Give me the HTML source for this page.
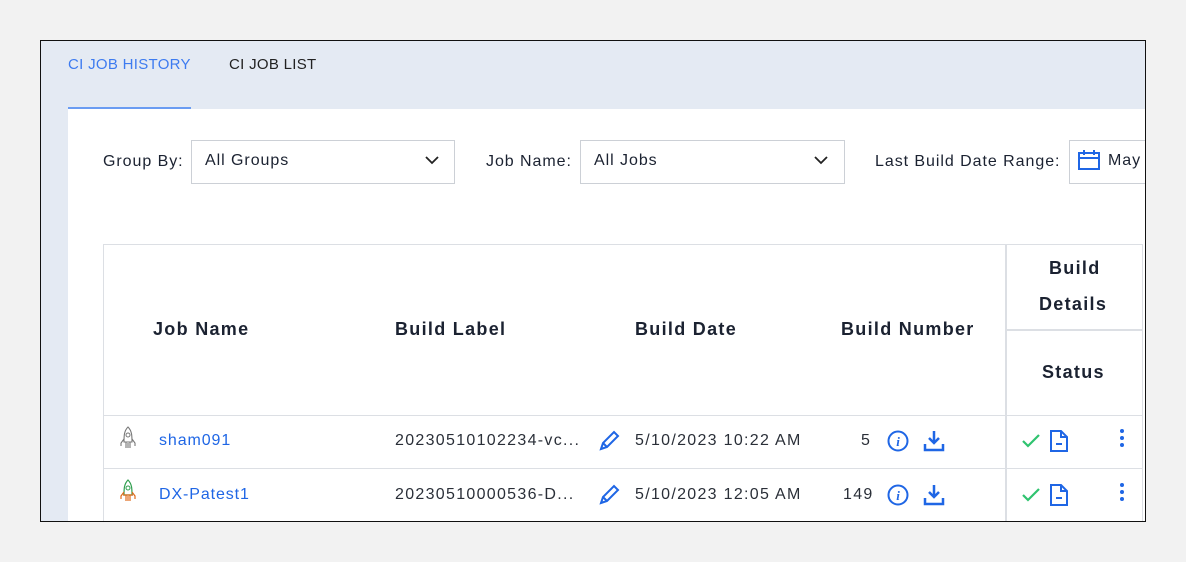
<!DOCTYPE html>
<html><head><style>
*{margin:0;padding:0;box-sizing:border-box}
body{width:1186px;height:562px;background:#f2f2f2;font-family:"Liberation Sans",sans-serif;position:relative;overflow:hidden}
.frame{position:absolute;left:40px;top:40px;width:1106px;height:482px;border:1px solid #111;background:#e4eaf3;overflow:hidden}
.a{position:absolute;white-space:nowrap}
.panel{position:absolute;left:27px;top:68px;width:1080px;height:420px;background:#fff}
.sel{position:absolute;height:44px;border:1px solid #ccd0d6;background:#fff}
.lbl{font-size:16px;color:#1b2231;letter-spacing:0.95px}
.th{font-size:18px;font-weight:bold;color:#1b2231;letter-spacing:1.3px}
.td{font-size:16px;color:#2a2f38;letter-spacing:1.3px}
.lnk{font-size:16px;color:#1f66e5;letter-spacing:0.9px}
.hl{position:absolute;background:#dcdfe4}
</style></head><body>
<div class="frame">
 <div class="a" style="left:27px;top:15px;font-size:15px;color:#3d7bf0;letter-spacing:0.3px">CI JOB HISTORY</div>
 <div class="a" style="left:188px;top:15px;font-size:15px;color:#222;letter-spacing:0.3px">CI JOB LIST</div>
 <div class="a" style="left:27px;top:66px;width:123px;height:3px;background:#6a9cf2"></div>
 <div class="panel"></div>
 <div class="a lbl" style="left:62px;top:112px">Group By:</div>
 <div class="sel" style="left:150px;top:99px;width:264px"></div>
 <div class="a lbl" style="left:164px;top:111px">All Groups</div>
 <svg class="a" style="left:384px;top:115px" width="14" height="9"><path d="M1 1l6 6 6-6" stroke="#222" stroke-width="1.8" fill="none"/></svg>
 <div class="a lbl" style="left:445px;top:112px">Job Name:</div>
 <div class="sel" style="left:539px;top:99px;width:265px"></div>
 <div class="a lbl" style="left:553px;top:111px">All Jobs</div>
 <svg class="a" style="left:773px;top:115px" width="14" height="9"><path d="M1 1l6 6 6-6" stroke="#222" stroke-width="1.8" fill="none"/></svg>
 <div class="a lbl" style="left:834px;top:112px">Last Build Date Range:</div>
 <div class="sel" style="left:1028px;top:99px;width:100px;border-right:none"></div>
 <svg class="a" style="left:1037px;top:109px" width="22" height="20"><rect x="1" y="3" width="20" height="16" stroke="#1f66e5" stroke-width="2" fill="none"/><path d="M1 8h20M6 0v5M16 0v5" stroke="#1f66e5" stroke-width="2"/></svg>
 <div class="a lbl" style="left:1067px;top:111px">May</div>

 <div class="hl" style="left:62px;top:203px;width:1040px;height:1px"></div>
 <div class="hl" style="left:62px;top:203px;width:1px;height:290px"></div>
 <div class="hl" style="left:964px;top:203px;width:2px;height:290px"></div>
 <div class="hl" style="left:1101px;top:203px;width:1px;height:290px"></div>
 <div class="hl" style="left:964px;top:288px;width:137px;height:2px"></div>
 <div class="hl" style="left:62px;top:374px;width:1040px;height:1px"></div>
 <div class="hl" style="left:62px;top:427px;width:1040px;height:1px"></div>

 <div class="a th" style="left:112px;top:278px">Job Name</div>
 <div class="a th" style="left:354px;top:278px">Build Label</div>
 <div class="a th" style="left:594px;top:278px">Build Date</div>
 <div class="a th" style="left:800px;top:278px">Build Number</div>
 <div class="a th" style="left:1008px;top:217px">Build</div>
 <div class="a th" style="left:998px;top:253px">Details</div>
 <div class="a th" style="left:1001px;top:321px">Status</div>

 <svg class="a" style="left:78px;top:385px" width="18" height="26"><path d="M9 1C5 5 5 10 5 16h8c0-6 0-11-4-15zM5 13l-3 4v3M13 13l3 4v3M7 16v6M11 16v6M9 17v5" stroke="#777" stroke-width="1.1" fill="none"/><circle cx="9" cy="9" r="2" stroke="#777" fill="none"/></svg>
 <div class="a lnk" style="left:118px;top:391px">sham091</div>
 <div class="a td" style="left:354px;top:391px">20230510102234-vc...</div>
 <svg class="a" style="left:556px;top:388px" width="24" height="24"><path d="M4 20l2-6L17 3l4 4L10 18z M6 14l4 4" stroke="#1f66e5" stroke-width="2" fill="none"/></svg>
 <div class="a td" style="left:594px;top:391px">5/10/2023 10:22 AM</div>
 <div class="a td" style="left:820px;top:391px">5</div>
 <svg class="a" style="left:846px;top:389px" width="22" height="22"><circle cx="11" cy="11" r="9.5" stroke="#1f66e5" stroke-width="2" fill="none"/><text x="11" y="16" font-size="13" font-style="italic" font-weight="bold" fill="#1f66e5" text-anchor="middle" font-family="Liberation Serif">i</text></svg>
 <svg class="a" style="left:882px;top:389px" width="22" height="22"><path d="M11 1v12M6 8l5 5 5-5M2 14v6h18v-6" stroke="#1f66e5" stroke-width="2.5" fill="none"/></svg>
 <svg class="a" style="left:981px;top:393px" width="18" height="14"><path d="M1 7l5 5L17 1" stroke="#2fc36f" stroke-width="2.2" fill="none"/></svg>
 <svg class="a" style="left:1009px;top:389px" width="18" height="22"><path d="M1 1h10l6 6v14H1z M11 1v6h6 M6 14h6" stroke="#1f66e5" stroke-width="2" fill="none"/></svg>
 <div class="a" style="left:1079px;top:388px;width:4px"><div style="width:4px;height:4px;border-radius:2px;background:#1f66e5;margin-bottom:3px"></div><div style="width:4px;height:4px;border-radius:2px;background:#1f66e5;margin-bottom:3px"></div><div style="width:4px;height:4px;border-radius:2px;background:#1f66e5"></div></div>

 <svg class="a" style="left:78px;top:438px" width="18" height="26"><path d="M9 1C5 5 5 10 5 16h8c0-6 0-11-4-15z" stroke="#2f9e4e" stroke-width="1.2" fill="none"/><circle cx="9" cy="9" r="2" stroke="#2f9e4e" fill="none"/><path d="M5 13l-3 4v3M13 13l3 4v3M7 16v6M11 16v6M9 17v5M4 16h10" stroke="#e06a1b" stroke-width="1.2" fill="none"/></svg>
 <div class="a lnk" style="left:118px;top:445px">DX-Patest1</div>
 <div class="a td" style="left:354px;top:445px">20230510000536-D...</div>
 <svg class="a" style="left:556px;top:442px" width="24" height="24"><path d="M4 20l2-6L17 3l4 4L10 18z M6 14l4 4" stroke="#1f66e5" stroke-width="2" fill="none"/></svg>
 <div class="a td" style="left:594px;top:445px">5/10/2023 12:05 AM</div>
 <div class="a td" style="left:802px;top:445px">149</div>
 <svg class="a" style="left:846px;top:443px" width="22" height="22"><circle cx="11" cy="11" r="9.5" stroke="#1f66e5" stroke-width="2" fill="none"/><text x="11" y="16" font-size="13" font-style="italic" font-weight="bold" fill="#1f66e5" text-anchor="middle" font-family="Liberation Serif">i</text></svg>
 <svg class="a" style="left:882px;top:443px" width="22" height="22"><path d="M11 1v12M6 8l5 5 5-5M2 14v6h18v-6" stroke="#1f66e5" stroke-width="2.5" fill="none"/></svg>
 <svg class="a" style="left:981px;top:447px" width="18" height="14"><path d="M1 7l5 5L17 1" stroke="#2fc36f" stroke-width="2.2" fill="none"/></svg>
 <svg class="a" style="left:1009px;top:443px" width="18" height="22"><path d="M1 1h10l6 6v14H1z M11 1v6h6 M6 14h6" stroke="#1f66e5" stroke-width="2" fill="none"/></svg>
 <div class="a" style="left:1079px;top:442px;width:4px"><div style="width:4px;height:4px;border-radius:2px;background:#1f66e5;margin-bottom:3px"></div><div style="width:4px;height:4px;border-radius:2px;background:#1f66e5;margin-bottom:3px"></div><div style="width:4px;height:4px;border-radius:2px;background:#1f66e5"></div></div>
</div>
</body></html>
